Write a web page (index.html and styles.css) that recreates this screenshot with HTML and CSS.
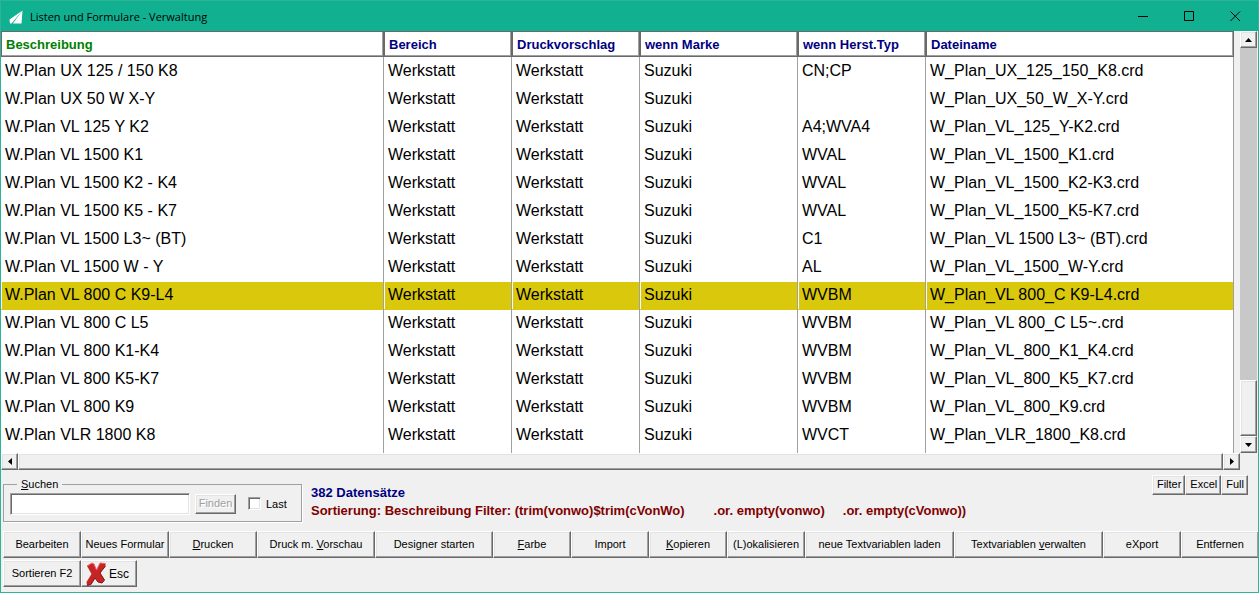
FILE: index.html
```html
<!DOCTYPE html>
<html lang="de">
<head>
    <meta charset="UTF-8">
    <meta name="viewport" content="width=device-width, initial-scale=1.0">
    <title>Listen und Formulare - Verwaltung</title>
    <link rel="stylesheet" href="styles.css">
</head>
<body>
    <div class="window">
        <header class="titlebar">
            <svg class="app-icon" viewBox="0 0 14 14" width="14" height="14" aria-hidden="true">
                <path d="M13.500 0.500 L0.500 9.500 L1 13.500 L2.500 13.500 Z" fill="#fff"/>
                <path d="M13.500 0.500 L3.800 13.500 L12.500 13.500 Z" fill="#fff"/>
            </svg>
            <h1>Listen und Formulare - Verwaltung</h1>
            <div class="window-buttons">
                <button type="button" aria-label="Minimieren"><svg width="11" height="11"><path d="M0 5.500H10"/></svg></button>
                <button type="button" aria-label="Maximieren"><svg width="11" height="11"><path d="M.5 .5H9.500V9.500H.5Z"/></svg></button>
                <button type="button" aria-label="Schließen"><svg width="11" height="11"><path d="M.5 .5L10 10M10 .5L.5 10"/></svg></button>
            </div>
        </header>

        <main class="browse">
            <div class="table-area">
                <table>
                    <colgroup>
                        <col class="col-name">
                        <col class="col-small">
                        <col class="col-small">
                        <col class="col-brand">
                        <col class="col-small">
                        <col>
                    </colgroup>
                    <thead>
                        <tr>
                            <th class="sorted">Beschreibung</th>
                            <th>Bereich</th>
                            <th>Druckvorschlag</th>
                            <th>wenn Marke</th>
                            <th>wenn Herst.Typ</th>
                            <th>Dateiname</th>
                        </tr>
                    </thead>
                    <tbody>
                        <tr><td>W.Plan UX 125 / 150 K8</td><td>Werkstatt</td><td>Werkstatt</td><td>Suzuki</td><td>CN;CP</td><td>W_Plan_UX_125_150_K8.crd</td></tr>
                        <tr><td>W.Plan UX 50 W X-Y</td><td>Werkstatt</td><td>Werkstatt</td><td>Suzuki</td><td></td><td>W_Plan_UX_50_W_X-Y.crd</td></tr>
                        <tr><td>W.Plan VL 125 Y K2</td><td>Werkstatt</td><td>Werkstatt</td><td>Suzuki</td><td>A4;WVA4</td><td>W_Plan_VL_125_Y-K2.crd</td></tr>
                        <tr><td>W.Plan VL 1500 K1</td><td>Werkstatt</td><td>Werkstatt</td><td>Suzuki</td><td>WVAL</td><td>W_Plan_VL_1500_K1.crd</td></tr>
                        <tr><td>W.Plan VL 1500 K2 - K4</td><td>Werkstatt</td><td>Werkstatt</td><td>Suzuki</td><td>WVAL</td><td>W_Plan_VL_1500_K2-K3.crd</td></tr>
                        <tr><td>W.Plan VL 1500 K5 - K7</td><td>Werkstatt</td><td>Werkstatt</td><td>Suzuki</td><td>WVAL</td><td>W_Plan_VL_1500_K5-K7.crd</td></tr>
                        <tr><td>W.Plan VL 1500 L3~ (BT)</td><td>Werkstatt</td><td>Werkstatt</td><td>Suzuki</td><td>C1</td><td>W_Plan_VL 1500 L3~ (BT).crd</td></tr>
                        <tr><td>W.Plan VL 1500 W - Y</td><td>Werkstatt</td><td>Werkstatt</td><td>Suzuki</td><td>AL</td><td>W_Plan_VL_1500_W-Y.crd</td></tr>
                        <tr class="selected"><td>W.Plan VL 800 C K9-L4</td><td>Werkstatt</td><td>Werkstatt</td><td>Suzuki</td><td>WVBM</td><td>W_Plan_VL 800_C K9-L4.crd</td></tr>
                        <tr><td>W.Plan VL 800 C L5</td><td>Werkstatt</td><td>Werkstatt</td><td>Suzuki</td><td>WVBM</td><td>W_Plan_VL 800_C L5~.crd</td></tr>
                        <tr><td>W.Plan VL 800 K1-K4</td><td>Werkstatt</td><td>Werkstatt</td><td>Suzuki</td><td>WVBM</td><td>W_Plan_VL_800_K1_K4.crd</td></tr>
                        <tr><td>W.Plan VL 800 K5-K7</td><td>Werkstatt</td><td>Werkstatt</td><td>Suzuki</td><td>WVBM</td><td>W_Plan_VL_800_K5_K7.crd</td></tr>
                        <tr><td>W.Plan VL 800 K9</td><td>Werkstatt</td><td>Werkstatt</td><td>Suzuki</td><td>WVBM</td><td>W_Plan_VL_800_K9.crd</td></tr>
                        <tr><td>W.Plan VLR 1800 K8</td><td>Werkstatt</td><td>Werkstatt</td><td>Suzuki</td><td>WVCT</td><td>W_Plan_VLR_1800_K8.crd</td></tr>
                        <tr><td></td><td></td><td></td><td></td><td></td><td></td></tr>
                    </tbody>
                </table>
            </div>
            <div class="scroll-v">
                <button type="button" class="scroll-button" aria-label="Nach oben"><svg width="7" height="4"><path d="M0 4L3.500 0L7 4Z"/></svg></button>
                <div class="track"></div>
                <div class="thumb"></div>
                <button type="button" class="scroll-button" aria-label="Nach unten"><svg width="7" height="4"><path d="M0 0H7L3.500 4Z"/></svg></button>
            </div>
            <div class="scroll-h">
                <button type="button" class="scroll-button" aria-label="Nach links"><svg width="4" height="7"><path d="M4 0V7L0 3.500Z"/></svg></button>
                <div class="thumb"></div>
                <button type="button" class="scroll-button" aria-label="Nach rechts"><svg width="4" height="7"><path d="M0 0L4 3.500L0 7Z"/></svg></button>
            </div>
        </main>

        <footer class="panel">
            <div class="info">
                <fieldset class="search">
                    <legend><label for="search"><u>S</u>uchen</label></legend>
                    <input type="text" id="search">
                    <button type="button" class="small-button" disabled>Finden</button>
                    <input type="checkbox" id="last">
                    <label for="last">Last</label>
                </fieldset>
                <div class="status">
                    <p class="count">382 Datensätze</p>
                    <p class="filter">Sortierung: Beschreibung Filter: (trim(vonwo)$trim(cVonWo)        .or. empty(vonwo)     .or. empty(cVonwo))</p>
                </div>
                <div class="views">
                    <button type="button" class="small-button">Filter</button>
                    <button type="button" class="small-button">Excel</button>
                    <button type="button" class="small-button">Full</button>
                </div>
            </div>
            <div class="toolbar">
                <button type="button">Bearbeiten</button>
                <button type="button" class="medium">Neues Formular</button>
                <button type="button" class="medium"><u>D</u>rucken</button>
                <button type="button" class="wide">Druck m. <u>V</u>orschau</button>
                <button type="button" class="wide">Desi<u>g</u>ner starten</button>
                <button type="button"><u>F</u>arbe</button>
                <button type="button">Import</button>
                <button type="button"><u>K</u>opieren</button>
                <button type="button">(L)okalisieren</button>
                <button type="button" class="extra-wide">neue Textvariablen laden</button>
                <button type="button" class="extra-wide">Textvariablen <u>v</u>erwalten</button>
                <button type="button">eXport</button>
                <button type="button">Entfernen</button>
            </div>
            <div class="toolbar">
                <button type="button">Sortieren F2</button>
                <button type="button" class="escape">
                    <svg viewBox="0 0 20 24" width="20" height="24" aria-hidden="true">
                        <path d="M1 4L6 1L8 2L10.500 8L14 1L19.500 1.500L19.500 4L14 11L18.500 18L16 21L12 20L9 16L5 22.500L1 23.500L0.500 20L5.500 12Z" fill="#c82424"/>
                        <path d="M1 4L6 1L8 2L10.500 8L14 1L19.500 1.500" fill="none" stroke="#e86a6a"/>
                        <path d="M19.500 4L14 11L18.500 18L16 21L12 20L9 16L5 22.500L1 23.500" fill="none" stroke="#7c1616"/>
                    </svg>
                    Esc
                </button>
            </div>
        </footer>
    </div>
</body>
</html>
```

FILE: styles.css
```css
* {
    box-sizing: border-box;
}

body {
    margin: 0;
    font-family: "Liberation Sans", Arial, sans-serif;
    font-size: 11px;
    color: #000;
}

button, input {
    font: inherit;
    color: inherit;
    margin: 0;
    padding: 0;
}

.window {
    display: flex;
    flex-direction: column;
    height: 100vh;
    border: 1px solid #2bb596;
    background-color: #f0f0f0;
    overflow: hidden;
}

/* Title bar */
.titlebar {
    display: flex;
    align-items: center;
    height: 30px;
    flex-shrink: 0;
    padding-left: 8px;
    background-color: #10b090;
}

.titlebar h1 {
    flex: 1;
    margin: 0 0 0 7px;
    font-family: "Open Sans", "Noto Sans", sans-serif;
    font-size: 11px;
    font-weight: normal;
}

.app-icon {
    margin-top: 2px;
}

.window-buttons {
    display: flex;
}

.window-buttons button {
    display: flex;
    align-items: center;
    justify-content: center;
    width: 46px;
    height: 30px;
    border: 0;
    background: none;
}

.window-buttons path {
    fill: none;
    stroke: #000;
}

/* Record table and its scrollbars */
.browse {
    display: grid;
    grid-template-columns: 1fr 17px;
    grid-template-rows: 1fr 17px;
    column-gap: 6px;
    flex: 1;
    min-height: 0;
    padding-right: 1px;
}

.table-area {
    overflow: hidden;
    background-color: #fff;
}

table {
    width: 100%;
    table-layout: fixed;
    border-collapse: separate;
    border-spacing: 0;
}

.col-name {
    width: 383px;
}

.col-small {
    width: 128px;
}

.col-brand {
    width: 158px;
}

th {
    height: 26px;
    padding: 0 0 0 4px;
    border: 1px solid #696969;
    box-shadow: inset -1px -1px #a0a0a0;
    font-size: 13px;
    text-align: left;
    color: #000080;
}

th.sorted {
    color: #008000;
}

td {
    height: 28px;
    padding: 0 0 0 4px;
    border-right: 1px solid #a0a0a0;
    font-size: 16px;
    white-space: nowrap;
}

/* the bar sits one pixel low, with a white gap at the column lines */
.selected td {
    background-color: #dac80c;
    box-shadow: inset 1px 1px #fff, 0 1px #dac80c;
}

.scroll-v,
.scroll-h {
    display: flex;
}

.scroll-v {
    flex-direction: column;
}

.scroll-h {
    grid-column: 1 / 3;
    margin-right: 17px;
}

.scroll-button,
.thumb,
.toolbar button,
.small-button {
    border: 1px solid;
    border-color: #fff #696969 #696969 #fff;
    box-shadow: inset -1px -1px #a0a0a0, inset 1px 1px #e3e3e3;
    background-color: #f0f0f0;
}

.scroll-button {
    display: flex;
    align-items: center;
    justify-content: center;
    width: 17px;
    height: 17px;
    flex-shrink: 0;
}

.track {
    flex: 334;
    background-color: #c8c8c8;
}

.scroll-v .thumb {
    flex: 54;
}

.scroll-h .thumb {
    flex: 1;
}

/* Bottom panel */
.panel {
    height: 122px;
    flex-shrink: 0;
    padding: 5px 0 0 2px;
}

.info {
    display: flex;
    align-items: flex-start;
    height: 56px;
}

.search {
    display: flex;
    align-items: center;
    width: 299px;
    height: 45px;
    margin: 2px 0 0;
    padding: 0 0 5px 6px;
    border: 1px solid #a0a0a0;
    box-shadow: 1px 1px #fff;
}

.search legend {
    margin-left: 7px;
    padding: 0 4px;
    line-height: 14px;
}

.search input[type="text"] {
    width: 180px;
    height: 22px;
    border: 1px solid;
    border-color: #a0a0a0 #fff #fff #a0a0a0;
    box-shadow: inset 1px 1px #696969, inset -1px -1px #e3e3e3;
    background-color: #fff;
}

.search .small-button {
    width: 41px;
    margin-left: 5px;
}

.search input[type="checkbox"] {
    appearance: none;
    width: 13px;
    height: 13px;
    margin: 0 5px 0 12px;
    border: 1px solid;
    border-color: #a0a0a0 #fff #fff #a0a0a0;
    box-shadow: inset 1px 1px #696969, inset -1px -1px #e3e3e3;
    background-color: #fff;
}

.small-button {
    height: 20px;
    padding-bottom: 2px;
}

.small-button:disabled {
    color: #a0a0a0;
    text-shadow: 1px 1px #fff;
}

.status {
    flex: 1;
    padding: 9px 0 0 9px;
    font-size: 13px;
    font-weight: bold;
    line-height: 18px;
}

.status p {
    margin: 0;
}

.count {
    color: #000080;
}

.filter {
    white-space: pre;
    color: #800000;
}

.views {
    display: flex;
    margin-right: 10px;
}

.views .small-button {
    padding: 0 3px 2px 4px;
}

.toolbar {
    display: flex;
    margin-bottom: 2px;
}

.toolbar button {
    width: 78px;
    height: 27px;
    flex-shrink: 0;
    padding-bottom: 2px;
    white-space: nowrap;
}

.toolbar .medium {
    width: 88px;
}

.toolbar .wide {
    width: 118px;
}

.toolbar .extra-wide {
    width: 149px;
}

.toolbar .escape {
    display: flex;
    align-items: center;
    gap: 3px;
    width: 56px;
    padding: 0 0 0 4px;
    font-size: 12px;
}
```
